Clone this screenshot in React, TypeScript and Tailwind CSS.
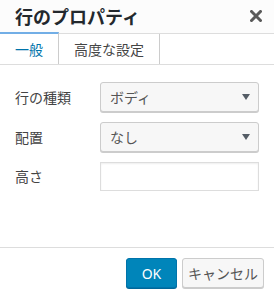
import { useState } from 'react';

const font = { fontFamily: '"Noto Sans", "Noto Sans CJK JP", sans-serif' };

function SelectBox({ value }: { value: string }) {
  return (
    <div className="flex h-[30px] w-[159px] items-center justify-between rounded-[3px] border border-[#cccccc] bg-[#f7f7f7] pl-[9px] pr-[8px] shadow-[0_1px_0_#cccccc]">
      <span className="text-[14px] text-[#555555]">{value}</span>
      <svg width="8" height="6" viewBox="0 0 8 6">
        <path d="M0 0 H8 L4 6 Z" fill="#555d66" />
      </svg>
    </div>
  );
}

export default function App() {
  const [tab, setTab] = useState(0);
  const tabs = ['一般', '高度な設定'];

  return (
    <div className="h-[296px] w-[274px] bg-white" style={font}>
      {/* header */}
      <div className="flex h-[33px] items-center justify-between bg-[#fcfcfc] pl-[15px] pr-[12px]">
        <h1 className="text-[18px] font-bold leading-none text-[#23282d]">行のプロパティ</h1>
        <svg width="12" height="12" viewBox="0 0 12 12" className="mb-[1px]">
          <path d="M1.5 1.5 L10.5 10.5 M10.5 1.5 L1.5 10.5" stroke="#5a5a5a" strokeWidth="3" strokeLinecap="square" />
        </svg>
      </div>

      {/* tabs */}
      <div className="flex h-[32px] border-y border-[#dddddd]">
        {tabs.map((t, i) => (
          <button
            key={t}
            onClick={() => setTab(i)}
            className={
              i === tab
                ? 'mt-[-2px] border-r border-t-2 border-r-[#cccccc] border-t-[#72aee6] bg-white px-[15px] text-[14px] text-[#0073aa]'
                : 'border-r border-[#cccccc] px-[15px] text-[14px] text-[#444444]'
            }
          >
            {t}
          </button>
        ))}
      </div>

      {/* form */}
      <div className="flex flex-col gap-[10px] px-[15px] pt-[17px]">
        <div className="flex items-center">
          <span className="w-[85px] text-[14px] text-[#444444]">行の種類</span>
          <SelectBox value="ボディ" />
        </div>
        <div className="flex items-center">
          <span className="w-[85px] text-[14px] text-[#444444]">配置</span>
          <SelectBox value="なし" />
        </div>
        <div className="flex items-center">
          <span className="w-[85px] text-[14px] text-[#444444]">高さ</span>
          <input className="h-[29px] w-[159px] border border-[#dddddd] bg-white shadow-[inset_0_1px_2px_rgba(0,0,0,0.07)] outline-none" />
        </div>
      </div>

      {/* footer */}
      <div className="mt-[56px] flex justify-end gap-[5px] border-t border-[#dddddd] pr-[10px] pt-[10px]">
        <button className="h-[30px] w-[51px] rounded-[3px] border border-[#0073aa] bg-[#0085ba] text-[14px] text-white shadow-[0_1px_0_#006799]">
          OK
        </button>
        <button className="h-[30px] w-[82px] rounded-[3px] border border-[#cccccc] bg-[#f7f7f7] text-[14px] text-[#555555] shadow-[0_1px_0_#cccccc]">
          キャンセル
        </button>
      </div>
    </div>
  );
}
